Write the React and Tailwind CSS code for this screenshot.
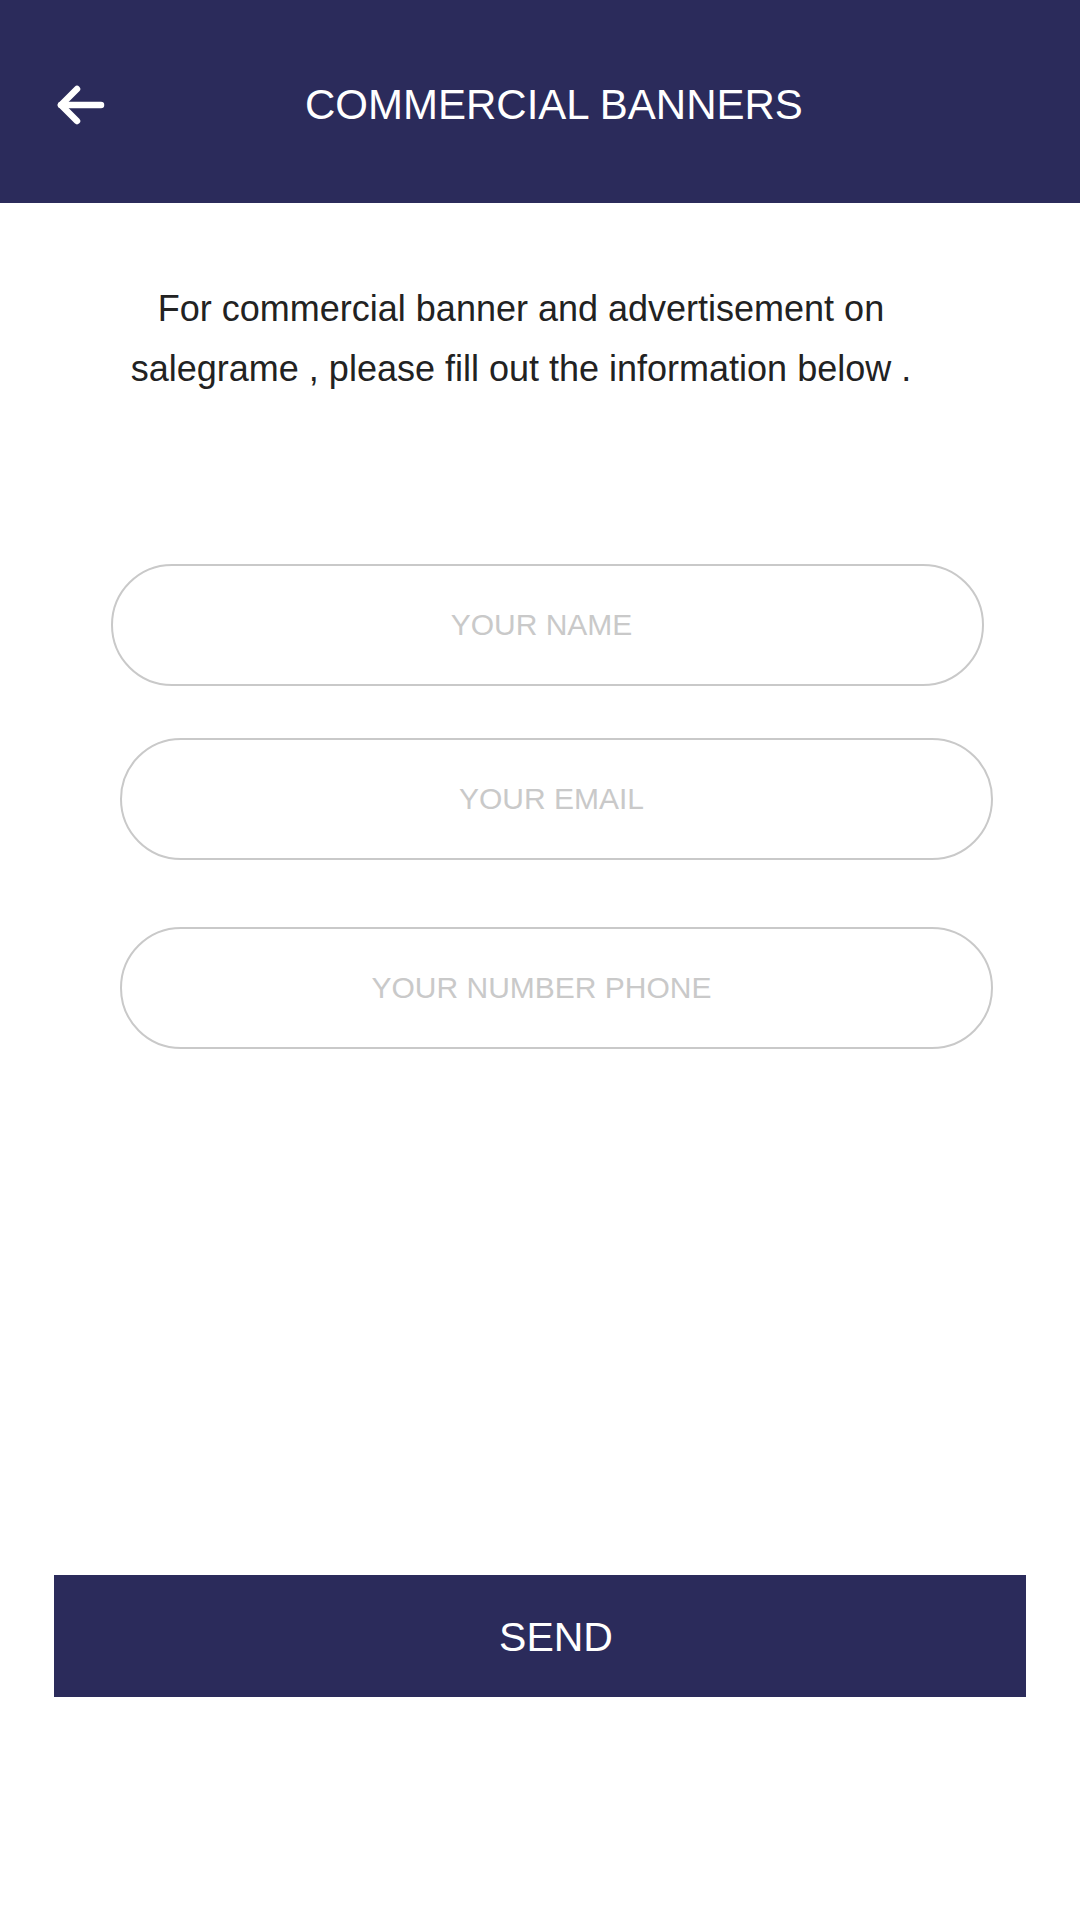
import React from 'react';

// ─── Icons ───────────────────────────────────────────────────────────────────

const BackArrow = () => (
  <svg width="48" height="40" viewBox="0 0 48 40" fill="none" stroke="#ffffff" strokeWidth="6.5" strokeLinecap="round" strokeLinejoin="round">
    <polyline points="20 4 4 20 20 36" />
    <line x1="4" y1="20" x2="44" y2="20" />
  </svg>
);

const Field = ({ placeholder, className }) => (
  <input
    type="text"
    placeholder={placeholder}
    className={`h-[122px] rounded-full border-[2.5px] border-[#c9c9c9] bg-white text-center text-[30px] text-[#333] placeholder:text-[#c9c9c9] outline-none ${className}`}
    style={{ fontFamily: '"Liberation Sans", Arial, sans-serif' }}
  />
);

// ─── Main Component ───────────────────────────────────────────────────────────

export default function App() {
  return (
    <div className="w-[1080px] min-h-[1920px] bg-white flex flex-col font-['Liberation_Sans',Arial,sans-serif]">
      {/* Header */}
      <div className="h-[203px] bg-[#2b2b5b] flex items-center pt-[6px]">
        <button className="ml-[57px] flex items-center">
          <BackArrow />
        </button>
        <h1 className="ml-[200px] text-[42px] text-white leading-none">COMMERCIAL BANNERS</h1>
      </div>

      {/* Intro */}
      <p className="mt-[76px] pr-[38px] text-center text-[36px] leading-[60px] text-[#222]">
        For commercial banner and advertisement on
        <br />
        salegrame , please fill out the information below .
      </p>

      {/* Form */}
      <div className="mt-[165px] flex flex-col">
        <Field placeholder="YOUR NAME" className="ml-[111px] w-[873px] pr-[12px]" />
        <Field placeholder="YOUR EMAIL" className="ml-[120px] w-[873px] mt-[52px] pr-[10px]" />
        <Field placeholder="YOUR NUMBER PHONE" className="ml-[120px] w-[873px] mt-[67px] pr-[30px]" />
      </div>

      <button className="mt-[526px] ml-[54px] w-[972px] h-[122px] bg-[#2b2b5b] text-white text-[41px] pl-[32px] pt-[4px]">
        SEND
      </button>
    </div>
  );
}
